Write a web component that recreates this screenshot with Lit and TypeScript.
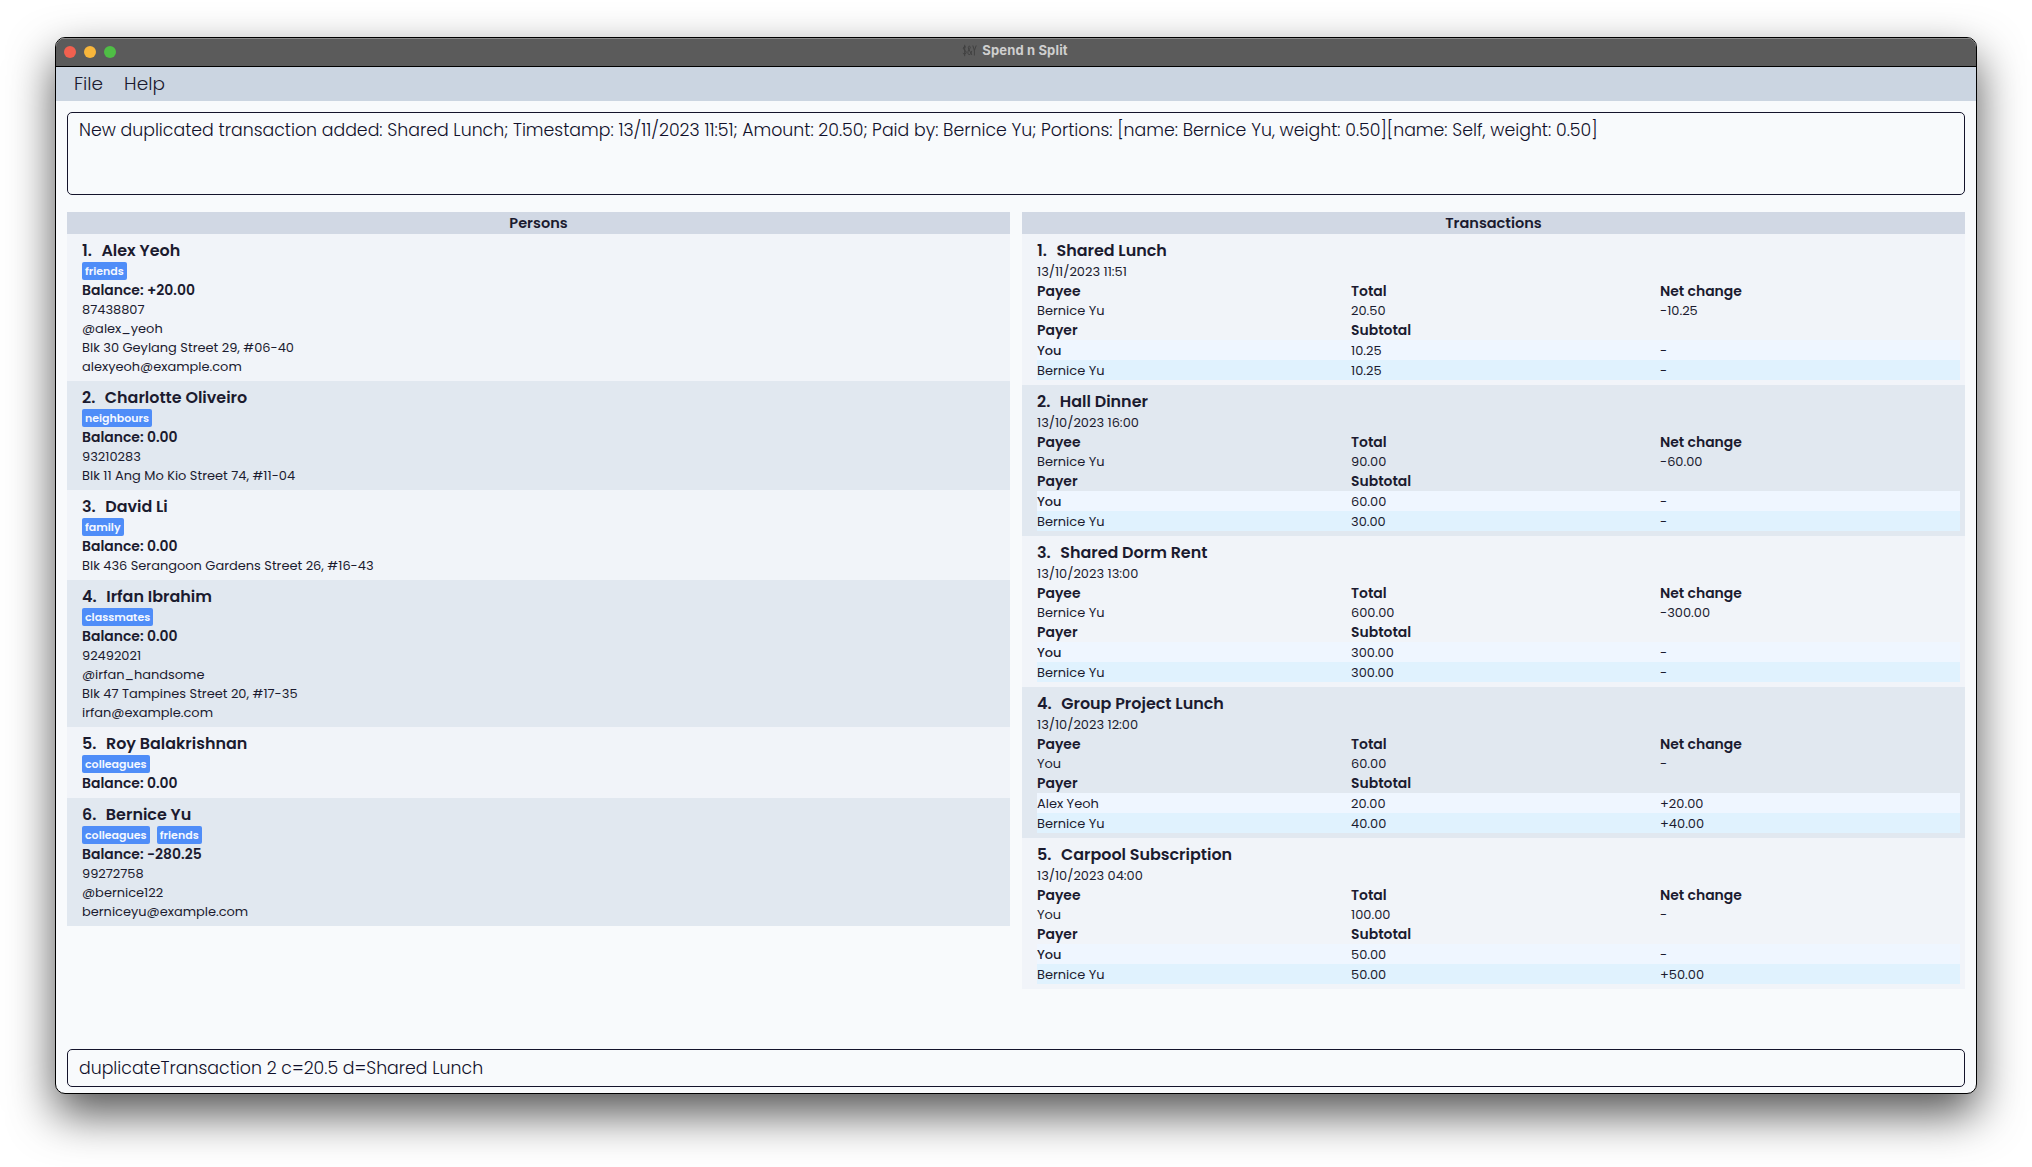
import { LitElement, html, css, nothing } from "lit";
import { customElement, property } from "lit/decorators.js";

interface Person {
  name: string;
  tags: string[];
  balance: string;
  details: string[];
}

interface Portion {
  payer: string;
  subtotal: string;
  net: string;
}

interface Transaction {
  name: string;
  time: string;
  payee: string;
  total: string;
  net: string;
  portions: Portion[];
}

const PERSONS: Person[] = [
  {
    name: "Alex Yeoh",
    tags: ["friends"],
    balance: "+20.00",
    details: ["87438807", "@alex_yeoh", "Blk 30 Geylang Street 29, #06-40", "alexyeoh@example.com"],
  },
  {
    name: "Charlotte Oliveiro",
    tags: ["neighbours"],
    balance: "0.00",
    details: ["93210283", "Blk 11 Ang Mo Kio Street 74, #11-04"],
  },
  {
    name: "David Li",
    tags: ["family"],
    balance: "0.00",
    details: ["Blk 436 Serangoon Gardens Street 26, #16-43"],
  },
  {
    name: "Irfan Ibrahim",
    tags: ["classmates"],
    balance: "0.00",
    details: ["92492021", "@irfan_handsome", "Blk 47 Tampines Street 20, #17-35", "irfan@example.com"],
  },
  { name: "Roy Balakrishnan", tags: ["colleagues"], balance: "0.00", details: [] },
  {
    name: "Bernice Yu",
    tags: ["colleagues", "friends"],
    balance: "-280.25",
    details: ["99272758", "@bernice122", "berniceyu@example.com"],
  },
];

const TRANSACTIONS: Transaction[] = [
  {
    name: "Shared Lunch",
    time: "13/11/2023 11:51",
    payee: "Bernice Yu",
    total: "20.50",
    net: "-10.25",
    portions: [
      { payer: "You", subtotal: "10.25", net: "-" },
      { payer: "Bernice Yu", subtotal: "10.25", net: "-" },
    ],
  },
  {
    name: "Hall Dinner",
    time: "13/10/2023 16:00",
    payee: "Bernice Yu",
    total: "90.00",
    net: "-60.00",
    portions: [
      { payer: "You", subtotal: "60.00", net: "-" },
      { payer: "Bernice Yu", subtotal: "30.00", net: "-" },
    ],
  },
  {
    name: "Shared Dorm Rent",
    time: "13/10/2023 13:00",
    payee: "Bernice Yu",
    total: "600.00",
    net: "-300.00",
    portions: [
      { payer: "You", subtotal: "300.00", net: "-" },
      { payer: "Bernice Yu", subtotal: "300.00", net: "-" },
    ],
  },
  {
    name: "Group Project Lunch",
    time: "13/10/2023 12:00",
    payee: "You",
    total: "60.00",
    net: "-",
    portions: [
      { payer: "Alex Yeoh", subtotal: "20.00", net: "+20.00" },
      { payer: "Bernice Yu", subtotal: "40.00", net: "+40.00" },
    ],
  },
  {
    name: "Carpool Subscription",
    time: "13/10/2023 04:00",
    payee: "You",
    total: "100.00",
    net: "-",
    portions: [
      { payer: "You", subtotal: "50.00", net: "-" },
      { payer: "Bernice Yu", subtotal: "50.00", net: "+50.00" },
    ],
  },
];

const cardStyles = css`
  :host {
    display: block;
    box-sizing: border-box;
    padding: 5px 5px 5px 15px;
  }
  .name {
    display: flex;
    gap: 9.5px;
    height: 23px;
    line-height: 23px;
    font-size: 15.95px;
    font-weight: 600;
    white-space: pre;
  }
  .strong {
    height: 20px;
    line-height: 21px;
    font-size: 13.95px;
    font-weight: 600;
  }
  .line {
    height: 19px;
    line-height: 19px;
    font-size: 12.96px;
  }
`;

@customElement("person-card")
export class PersonCard extends LitElement {
  @property({ attribute: false }) person!: Person;
  @property({ type: Number }) index = 1;

  static styles = [
    cardStyles,
    css`
      .tags {
        display: flex;
        gap: 7px;
        height: 18px;
      }
      .tag {
        height: 18px;
        line-height: 18px;
        padding: 0 3.3px 0 3px;
        border-radius: 2px;
        background: #4f8df8;
        color: #f4f8ff;
        font-size: 11px;
        font-weight: 600;
      }
    `,
  ];

  render() {
    const p = this.person;
    return html`
      <div class="name"><span>${this.index}.</span><span>${p.name}</span></div>
      <div class="tags">${p.tags.map((t) => html`<span class="tag">${t}</span>`)}</div>
      <div class="strong">Balance: ${p.balance}</div>
      ${p.details.map((d) => html`<div class="line">${d}</div>`)}
    `;
  }
}

@customElement("transaction-card")
export class TransactionCard extends LitElement {
  @property({ attribute: false }) transaction!: Transaction;
  @property({ type: Number }) index = 1;

  static styles = [
    cardStyles,
    css`
      .row {
        display: grid;
        grid-template-columns: 314px 309px 1fr;
      }
      .portion {
        height: 20px;
        line-height: 22px;
      }
      .portion:nth-child(odd) {
        background: #eff6ff;
      }
      .portion:nth-child(even) {
        background: #e0f2fe;
      }
      .you {
        font-weight: 500;
      }
    `,
  ];

  render() {
    const t = this.transaction;
    return html`
      <div class="name"><span>${this.index}.</span><span>${t.name}</span></div>
      <div class="line">${t.time}</div>
      <div class="row strong"><span>Payee</span><span>Total</span><span>Net change</span></div>
      <div class="row line"><span>${t.payee}</span><span>${t.total}</span><span>${t.net}</span></div>
      <div class="row strong"><span>Payer</span><span>Subtotal</span></div>
      <div class="portions">
        ${t.portions.map(
          (p) => html`<div class="row line portion">
            <span class=${p.payer === "You" ? "you" : nothing}>${p.payer}</span>
            <span>${p.subtotal}</span><span>${p.net}</span>
          </div>`,
        )}
      </div>
    `;
  }
}

@customElement("app-root")
export class AppRoot extends LitElement {
  static styles = css`
    :host {
      display: block;
      box-sizing: border-box;
      width: 2032px;
      height: 1167px;
      padding: 37px 55px 73px;
      overflow: hidden;
      background: #fff;
      color: #1b1b2f;
      font-family: "Poppins", "Inter", "Open Sans", sans-serif;
    }
    .window {
      display: flex;
      flex-direction: column;
      box-sizing: border-box;
      height: 1057px;
      border: 1px solid #000;
      border-radius: 10px;
      overflow: hidden;
      background: #f8fafc;
      box-shadow: 0 20px 46px rgba(0, 0, 0, 0.67);
    }
    .titlebar {
      display: grid;
      grid-template-columns: 1fr auto 1fr;
      align-items: center;
      box-sizing: border-box;
      height: 29px;
      border-top: 1px solid #8b8b8b;
      border-bottom: 1px solid #000;
      background: #5b5b5b;
    }
    .lights {
      display: flex;
      gap: 8px;
      padding: 0 0 1px 8px;
    }
    .light {
      width: 12px;
      height: 12px;
      border-radius: 50%;
    }
    .close { background: #f1604f; }
    .minimise { background: #f8b63b; }
    .zoom { background: #4fbe45; }
    .title {
      display: flex;
      align-items: center;
      gap: 5px;
      height: 20px;
      padding-bottom: 6px;
      padding-right: 2px;
      color: #cfcfcf;
      font-family: "Inter", sans-serif;
      font-size: 13px;
      font-weight: 700;
      letter-spacing: 0.15px;
    }
    .app-icon {
      width: 15px;
      height: 13px;
      margin-top: 1px;
      fill: none;
      stroke: #3e3e3e;
      stroke-width: 0.9;
    }
    .menubar {
      display: flex;
      gap: 21px;
      height: 34px;
      padding-left: 18px;
      background: #cbd5e1;
      font-size: 18.5px;
      font-weight: 300;
      line-height: 33px;
    }
    .body {
      display: flex;
      flex: 1;
      flex-direction: column;
      padding: 11px 11px 6px;
    }
    .result,
    .command {
      box-sizing: border-box;
      border: 1px solid #14142b;
      border-radius: 5px;
      padding-left: 11px;
      color: #10102a;
      font-size: 17.33px;
      font-weight: 300;
      white-space: pre;
    }
    .result {
      height: 83px;
      padding-top: 4px;
      line-height: 27px;
    }
    .command {
      height: 38px;
      line-height: 37px;
    }
    .panels {
      display: grid;
      flex: 1;
      grid-template-columns: 943px 943px;
      gap: 12px;
      align-items: start;
      margin-top: 17px;
    }
    .heading {
      height: 22px;
      line-height: 23px;
      background: #d1d8e4;
      font-size: 14.5px;
      font-weight: 600;
      text-align: center;
    }
    .card:nth-child(odd) { background: #e1e8f0; }
    .card:nth-child(even) { background: #f1f4f9; }
  `;

  render() {
    return html`
      <div class="window">
        <div class="titlebar">
          <div class="lights">
            <span class="light close"></span>
            <span class="light minimise"></span>
            <span class="light zoom"></span>
          </div>
          <div class="title">
            <svg class="app-icon" viewBox="0 0 15 13">
              <path d="M4 3.400C3.400 2.200 1.300 2.400 1.300 4.200c0 1.900 2.900 2 2.900 4.100C4.200 10.300 1.700 10.500 .9 9M2.700 .8v11.400" />
              <path d="M9.900 11L6.700 5C5.800 3.200 6.600 2 7.500 2.200c1.200.3.900 1.900-.2 3C5.500 7 5.400 10.600 7.200 10.600c1.500 0 2.300-1.500 2.500-3.700" />
              <path d="M10.800 1.500l1.600 5L14.200 1.500M12.400 6.500V11.500" />
            </svg>
            <span>Spend n Split</span>
          </div>
        </div>
        <div class="menubar"><span>File</span><span>Help</span></div>
        <div class="body">
          <div class="result">New duplicated transaction added: Shared Lunch; Timestamp: 13/11/2023 11:51; Amount: 20.50; Paid by: Bernice Yu; Portions: [name: Bernice Yu, weight: 0.50][name: Self, weight: 0.50]</div>
          <div class="panels">
            <section>
              <div class="heading">Persons</div>
              ${PERSONS.map((p, i) => html`<person-card class="card" .person=${p} .index=${i + 1}></person-card>`)}
            </section>
            <section>
              <div class="heading">Transactions</div>
              ${TRANSACTIONS.map(
                (t, i) => html`<transaction-card class="card" .transaction=${t} .index=${i + 1}></transaction-card>`,
              )}
            </section>
          </div>
          <div class="command">duplicateTransaction 2 c=20.5 d=Shared Lunch</div>
        </div>
      </div>
    `;
  }
}
